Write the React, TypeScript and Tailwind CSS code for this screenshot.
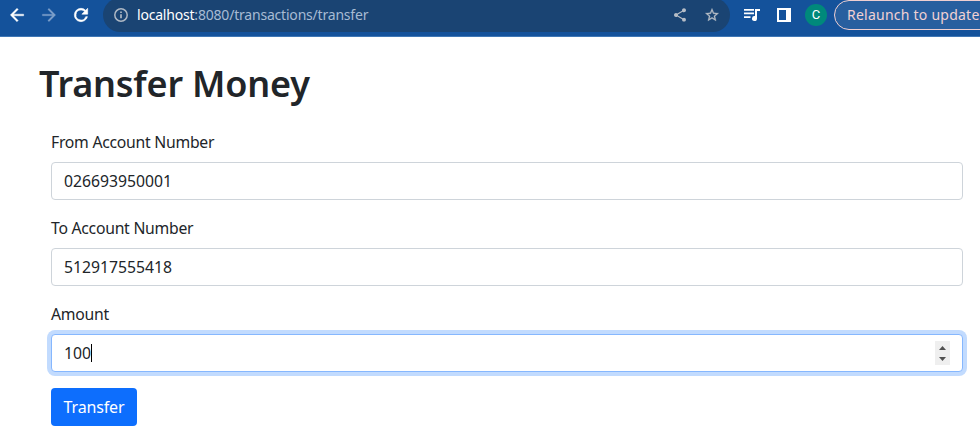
import React from "react";

function Toolbar() {
  return (
    <header className="flex h-[37px] items-start overflow-hidden border-b border-[#3f77b5] bg-[#14529b] text-white">
      <div className="flex h-[30px] w-[103px] shrink-0 items-center pl-[7px]">
        <svg className="h-5 w-5 shrink-0" viewBox="0 0 24 24" fill="currentColor">
          <path d="M20 11H7.83l5.59-5.59L12 4l-8 8 8 8 1.41-1.41L7.83 13H20v-2z" stroke="currentColor" strokeWidth=".5" />
        </svg>
        <svg className="ml-3 h-5 w-5 shrink-0 text-[#7c9fca]" viewBox="0 0 24 24" fill="currentColor">
          <path d="M12 4l-1.41 1.41L16.17 11H4v2h12.17l-5.58 5.59L12 20l8-8z" stroke="currentColor" strokeWidth=".3" />
        </svg>
        <svg className="ml-3 h-5 w-5 shrink-0" viewBox="0 0 24 24" fill="currentColor">
          <path d="M17.65 6.35A7.96 7.96 0 0 0 12 4a8 8 0 1 0 7.73 10h-2.08A6 6 0 1 1 12 6c1.66 0 3.14.69 4.22 1.78L13 11h7V4z" stroke="currentColor" strokeWidth=".7" />
        </svg>
      </div>
      <div className="-mt-0.5 flex h-[34px] w-[627px] shrink-0 items-center rounded-full bg-[#1a4473] pr-2.5 pl-2.5">
        <svg className="h-4 w-4 shrink-0 text-[#aeb8c4]" viewBox="0 0 16 16" fill="none" stroke="currentColor" strokeWidth="1.5">
          <circle cx="8" cy="8" r="6.2" />
          <path d="M8 7.2v4M8 4.5V6" strokeWidth="1.7" />
        </svg>
        <span className="ml-2 text-[14px] leading-5 tracking-[-0.2px] whitespace-nowrap text-[#a7bbd3]">
          <span className="text-white">localhost</span>:8080/transactions/transfer
        </span>
        <div className="ml-auto flex items-center gap-4 text-[#b6bdc6]">
          <svg className="h-4 w-4" viewBox="0 0 24 24" fill="currentColor">
            <path d="M18 16.08c-.76 0-1.44.3-1.96.77L8.91 12.7c.05-.23.09-.46.09-.7s-.04-.47-.09-.7l7.05-4.11c.54.5 1.25.81 2.04.81 1.66 0 3-1.34 3-3s-1.34-3-3-3-3 1.34-3 3c0 .24.04.47.09.7L8.04 9.81C7.5 9.31 6.79 9 6 9c-1.66 0-3 1.34-3 3s1.34 3 3 3c.79 0 1.5-.31 2.04-.81l7.12 4.16c-.05.21-.08.43-.08.65 0 1.61 1.31 2.92 2.92 2.92s2.92-1.31 2.92-2.92-1.31-2.92-2.92-2.92z" />
          </svg>
          <svg className="h-4 w-4" viewBox="0 0 24 24" fill="currentColor">
            <path d="M22 9.24l-7.19-.62L12 2 9.19 8.63 2 9.24l5.46 4.73L5.82 21 12 17.27 18.18 21l-1.63-7.03L22 9.24zM12 15.4l-3.76 2.27 1-4.28-3.32-2.88 4.38-.38L12 6.1l1.71 4.04 4.38.38-3.32 2.88 1 4.28L12 15.4z" stroke="currentColor" strokeWidth=".4" />
          </svg>
        </div>
      </div>
      <div className="flex h-[30px] shrink-0 items-center">
        <svg className="ml-3 h-5 w-5" viewBox="0 0 20 20" fill="currentColor">
          <path d="M2 4h10v1.7H2zM2 7.5h10v1.7H2zM2 11.2h6.5v1.7H2zM13 4h5v2h-3v7.5a2.5 2.5 0 1 1-2-2.4z" />
        </svg>
        <svg className="ml-[15px] h-3.5 w-3.5" viewBox="0 0 14 14">
          <path d="M0 0h14v14H0zM2 2v10h7V2z" fill="currentColor" fillRule="evenodd" />
        </svg>
        <span className="ml-3.5 flex h-[22px] w-[22px] items-center justify-center rounded-full bg-[#00897b] font-[Roboto] text-[13px]">C</span>
      </div>
      <div className="ml-[7px] flex h-[30px] w-[180px] shrink-0 items-center rounded-full border border-[#efcfd1] bg-[#285f9f] pb-0.5 pl-3 text-[14px] tracking-[0.24px] whitespace-nowrap text-[#f1d1d3]">
        Relaunch to update
      </div>
    </header>
  );
}

function Field({ label, children }: { label: string; children: React.ReactNode }) {
  return (
    <div className="mb-4">
      <label className="mb-2 block h-6 text-[15.75px] leading-6 tracking-[-0.26px] whitespace-nowrap">{label}</label>
      {children}
    </div>
  );
}

const box = "flex h-[38px] items-center rounded-[4px] border bg-white px-3 text-[15.75px]";

export default function App() {
  return (
    <div className="h-[442px] overflow-hidden bg-white font-['Noto_Sans','Open_Sans',sans-serif] text-[#212529]">
      <Toolbar />
      <main className="pt-[25px] pr-[17px] pl-[39px]">
        <h1 className="h-[44px] text-[36px] leading-[44px] font-semibold tracking-[-0.2px] whitespace-nowrap">Transfer Money</h1>
        <form className="mt-6 pl-3">
          <Field label="From Account Number">
            <div className={`${box} border-[#ced4da]`}>
              <span className="pt-0.5">026693950001</span>
            </div>
          </Field>
          <Field label="To Account Number">
            <div className={`${box} border-[#ced4da]`}>
              <span className="pt-0.5">512917555418</span>
            </div>
          </Field>
          <Field label="Amount">
            <div className={`${box} border-[#86b7fe] shadow-[0_0_0_4px_#c2dbfe]`}>
              <span className="pt-0.5">100</span>
              <span className="h-[18px] w-px bg-black" />
              <span className="ml-auto flex h-6 w-[15px] flex-col items-center justify-center gap-[7px] bg-[#efefef]">
                <svg className="h-1 w-[7px]" viewBox="0 0 7 4"><path d="M0 4 3.5 0 7 4z" fill="#505050" /></svg>
                <svg className="h-1 w-[7px]" viewBox="0 0 7 4"><path d="M0 0 3.5 4 7 0z" fill="#505050" /></svg>
              </span>
            </div>
          </Field>
          <button type="button" className="block h-[38px] w-[86px] rounded-[4px] bg-[#0d6efd] text-[16px] leading-[38px] tracking-[-0.15px] whitespace-nowrap text-white">
            Transfer
          </button>
        </form>
      </main>
    </div>
  );
}
